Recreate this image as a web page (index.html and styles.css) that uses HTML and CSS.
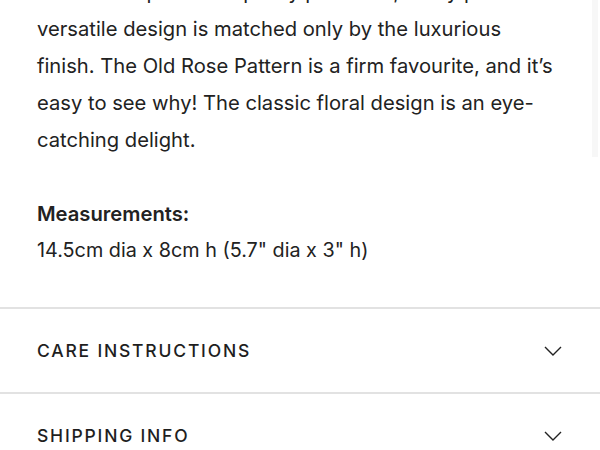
FILE: index.html
```html
<!DOCTYPE html>
<html>
<head>
<meta charset="utf-8">
<link rel="stylesheet" href="styles.css">
</head>
<body>
<div class="page">
  <section class="desc">
    <p class="body">Made from premium quality porcelain, every piece in this<br>versatile design is matched only by the luxurious<br>finish. The Old Rose Pattern is a firm favourite, and it’s<br>easy to see why! The classic floral design is an eye-<br>catching delight.</p>
    <p class="label">Measurements:</p>
    <p class="body value">14.5cm dia x 8cm h (5.7" dia x 3" h)</p>
  </section>
  <div class="accordion">
    <div class="acc-row">
      <span class="acc-title">CARE INSTRUCTIONS</span>
      <svg class="chev" width="20" height="12" viewBox="0 0 20 12"><path d="M2 2 L10 10 L18 2" fill="none" stroke="#222" stroke-width="1.4"/></svg>
    </div>
    <div class="acc-row">
      <span class="acc-title">SHIPPING INFO</span>
      <svg class="chev" width="20" height="12" viewBox="0 0 20 12"><path d="M2 2 L10 10 L18 2" fill="none" stroke="#222" stroke-width="1.4"/></svg>
    </div>
  </div>
  <div class="scrolltrack"></div>
</div>
</body>
</html>
```
FILE: styles.css
```css
html, body {
  margin: 0;
  padding: 0;
  background: #fff;
  overflow: hidden;
}
.page {
  position: relative;
  width: 600px;
  height: 450px;
  overflow: hidden;
  font-family: "Inter", "Noto Sans", sans-serif;
  color: #222;
}
.desc {
  padding: 0 30px 0 37px;
  margin-top: -27px;
  white-space: nowrap;
}
.desc p {
  margin: 0;
  font-size: 20.2px;
  line-height: 37px;
}
.desc .body + .label {
  margin-top: 37px;
}
.desc .value {
  font-size: 19.8px;
}
.label {
  font-weight: 600;
}
.accordion {
  margin-top: 38px;
}
.acc-row {
  display: flex;
  align-items: center;
  justify-content: space-between;
  height: 83px;
  padding: 0 37px;
  border-top: 2px solid #e2e2e2;
}
.acc-title {
  font-family: "Inter", "Open Sans", sans-serif;
  font-size: 17.5px;
  font-weight: 500;
  letter-spacing: 1.8px;
  color: #1e1e1e;
}
.chev {
  display: block;
}
.scrolltrack {
  position: absolute;
  top: 0;
  right: 2px;
  width: 6px;
  height: 157px;
  background: #f7f7f7;
}
```
